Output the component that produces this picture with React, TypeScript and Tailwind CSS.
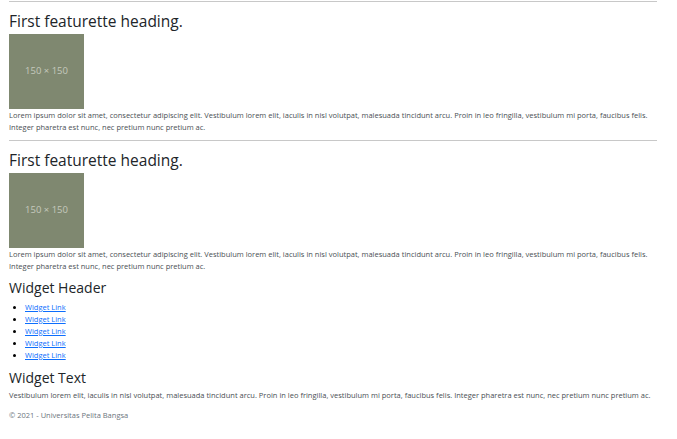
import React from 'react';

const lorem =
  'Lorem ipsum dolor sit amet, consectetur adipiscing elit. Vestibulum lorem elit, iaculis in nisl volutpat, malesuada tincidunt arcu. Proin in leo fringilla, vestibulum mi porta, faucibus felis. Integer pharetra est nunc, nec pretium nunc pretium ac.';

const widgetText =
  'Vestibulum lorem elit, iaculis in nisl volutpat, malesuada tincidunt arcu. Proin in leo fringilla, vestibulum mi porta, faucibus felis. Integer pharetra est nunc, nec pretium nunc pretium ac.';

function Placeholder() {
  return (
    <div className="w-[75px] h-[75px] bg-[#7f8870] flex items-center justify-center">
      <span className="text-[9.5px] text-[#c5c9bd]">150 × 150</span>
    </div>
  );
}

function Featurette() {
  return (
    <div>
      <hr className="border-0 border-t border-[#c8c8c8]" />
      <h2 className="mt-[8px] text-[15.5px] leading-[22px] text-[#212529] font-medium">
        First featurette heading.
      </h2>
      <div className="mt-[2px]">
        <Placeholder />
      </div>
      <p className="text-[7.5px] leading-[12px] text-[#4a4f54]">{lorem}</p>
    </div>
  );
}

export default function App() {
  return (
    <div
      className="bg-white min-h-[439px] pl-[9px] pr-[20px] pt-[1px]"
      style={{ fontFamily: '"Open Sans", "Noto Sans", sans-serif' }}
    >
      <Featurette />
      <div className="mt-[7px]">
        <Featurette />
      </div>

      <h3 className="mt-[7px] text-[14px] leading-[18px] text-[#212529] font-medium">Widget Header</h3>
      <ul className="mt-[4px] pl-[16px] list-disc text-[7.5px] leading-[12px]">
        {[0, 1, 2, 3, 4].map((i) => (
          <li key={i}>
            <a href="#" className="text-[#0d6efd] underline">
              Widget Link
            </a>
          </li>
        ))}
      </ul>

      <h3 className="mt-[8px] text-[14px] leading-[18px] text-[#212529] font-medium">Widget Text</h3>
      <p className="mt-[2px] text-[7.5px] leading-[12px] text-[#4a4f54]">{widgetText}</p>

      <p className="mt-[8px] text-[7.5px] leading-[12px] text-[#6c757d]">© 2021 - Universitas Pelita Bangsa</p>
    </div>
  );
}
